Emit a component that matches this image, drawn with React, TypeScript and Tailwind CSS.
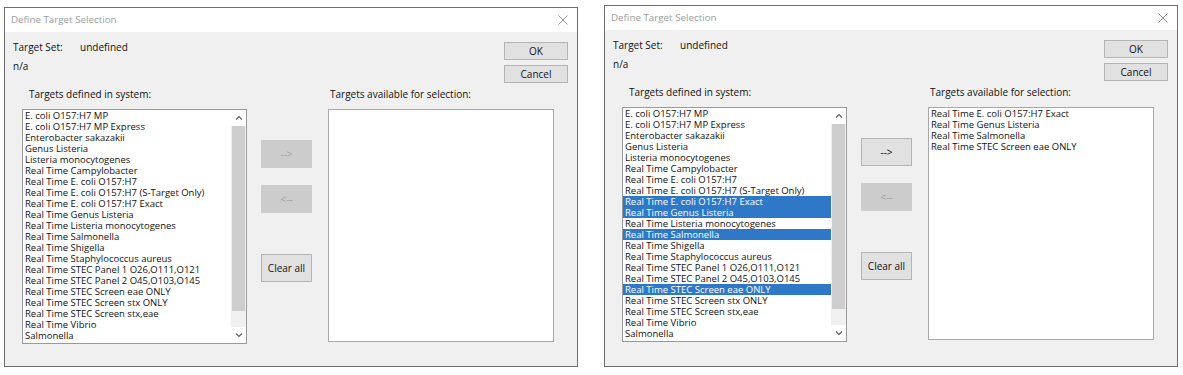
const targets = [
  'E. coli O157:H7 MP',
  'E. coli O157:H7 MP Express',
  'Enterobacter sakazakii',
  'Genus Listeria',
  'Listeria monocytogenes',
  'Real Time Campylobacter',
  'Real Time E. coli O157:H7',
  'Real Time E. coli O157:H7 (S-Target Only)',
  'Real Time E. coli O157:H7 Exact',
  'Real Time Genus Listeria',
  'Real Time Listeria monocytogenes',
  'Real Time Salmonella',
  'Real Time Shigella',
  'Real Time Staphylococcus aureus',
  'Real Time STEC Panel 1 O26,O111,O121',
  'Real Time STEC Panel 2 O45,O103,O145',
  'Real Time STEC Screen eae ONLY',
  'Real Time STEC Screen stx ONLY',
  'Real Time STEC Screen stx,eae',
  'Real Time Vibrio',
  'Salmonella',
  'Yeast and Mold Direct',
];

const font = { fontFamily: '"Open Sans", "Noto Sans", Arial, sans-serif' };

function Chevron({ up }: { up?: boolean }) {
  return (
    <svg className="w-[8px] h-[6px]" viewBox="0 0 8 6" fill="none">
      <path
        d={up ? 'M1 4.5 L4 1.5 L7 4.5' : 'M1 1.5 L4 4.5 L7 1.5'}
        stroke="#606060"
        strokeWidth="1.2"
      />
    </svg>
  );
}

function Button({ label, disabled, className = '' }: { label: string; disabled?: boolean; className?: string }) {
  return (
    <div
      className={`flex items-center justify-center text-[10px] ${
        disabled
          ? 'bg-[#cccccc] text-[#a3a3a3] border border-[#cccccc]'
          : 'bg-[#e1e1e1] text-[#111] border border-[#b4b4b4]'
      } ${className}`}
    >
      {label}
    </div>
  );
}

function Dialog({
  selected,
  available,
  addEnabled,
  className = '',
}: {
  selected: number[];
  available: string[];
  addEnabled: boolean;
  className?: string;
}) {
  return (
    <div className={`flex flex-col w-[574px] border border-[#6e6e6e] bg-[#f0f0f0] ${className}`}>
      <div className="h-[24px] bg-white flex items-center justify-between pl-[6px] pr-[9px] shrink-0">
        <span className="text-[9.8px] text-[#9c9c9c]">Define Target Selection</span>
        <svg className="w-[10px] h-[10px]" viewBox="0 0 10 10">
          <path d="M0.5 0.5 L9.5 9.5 M9.5 0.5 L0.5 9.5" stroke="#8a8a8a" strokeWidth="0.9" />
        </svg>
      </div>

      <div className="flex justify-between h-[52px] pl-[8px] pr-[9px] shrink-0">
        <div className="flex flex-col text-[10px] text-[#111] pt-[8px] leading-[14px]">
          <div className="flex">
            <span className="w-[67px]">Target Set:</span>
            <span>undefined</span>
          </div>
          <span className="mt-[5px]">n/a</span>
        </div>
        <div className="flex flex-col gap-[5px] pt-[10px]">
          <Button label="OK" className="w-[64px] h-[18px]" />
          <Button label="Cancel" className="w-[64px] h-[18px]" />
        </div>
      </div>

      <div className="flex items-start pl-[17px]">
        <div className="flex flex-col w-[225px]">
          <span className="mt-[3px] h-[14px] leading-[14px] pl-[7px] text-[10px] text-[#111]">
            Targets defined in system:
          </span>
          <div className="mt-[8px] h-[235px] border border-[#9a9a9a] bg-white flex overflow-hidden">
            <div className="flex-1 flex flex-col overflow-hidden">
              {targets.map((t, i) => {
                const sel = selected.includes(i);
                return (
                  <div
                    key={t}
                    className={`h-[11px] leading-[11px] pl-[2px] text-[9.5px] whitespace-nowrap shrink-0 ${
                      sel ? 'bg-[#2f78c8] text-white' : 'text-[#111]'
                    }`}
                  >
                    {t}
                  </div>
                );
              })}
            </div>
            <div className="w-[15px] flex flex-col bg-[#f0f0f0] shrink-0">
              <div className="h-[16px] flex items-center justify-center bg-white">
                <Chevron up />
              </div>
              <div className="mx-[1px] h-[185px] bg-[#cdcdcd]" />
              <div className="flex-1" />
              <div className="h-[16px] flex items-center justify-center bg-white">
                <Chevron />
              </div>
            </div>
          </div>
        </div>

        <div className="flex flex-col ml-[14px] mt-[56px] w-[51px]">
          <Button label="-->" disabled={!addEnabled} className="h-[28px]" />
          <Button label="<--" disabled className="h-[28px] mt-[17px]" />
          <Button label="Clear all" className="h-[28px] mt-[41px]" />
        </div>

        <div className="flex flex-col w-[226px] ml-[16px]">
          <span className="mt-[3px] h-[14px] leading-[14px] pl-[2px] text-[10px] text-[#111]">
            Targets available for selection:
          </span>
          <div className="mt-[8px] h-[233px] border border-[#a8a8a8] bg-white flex flex-col">
            {available.map((t) => (
              <div key={t} className="h-[11px] leading-[11px] pl-[2px] text-[9.5px] text-[#111] whitespace-nowrap">
                {t}
              </div>
            ))}
          </div>
        </div>
      </div>
    </div>
  );
}

export default function App() {
  return (
    <div className="w-[1183px] h-[375px] bg-white flex items-start pl-[4px] gap-[26px]" style={font}>
      <Dialog className="mt-[7px] h-[360px]" selected={[]} available={[]} addEnabled={false} />
      <Dialog
        className="mt-[5px] h-[362px]"
        selected={[8, 9, 11, 16]}
        available={[
          'Real Time E. coli O157:H7 Exact',
          'Real Time Genus Listeria',
          'Real Time Salmonella',
          'Real Time STEC Screen eae ONLY',
        ]}
        addEnabled
      />
    </div>
  );
}
